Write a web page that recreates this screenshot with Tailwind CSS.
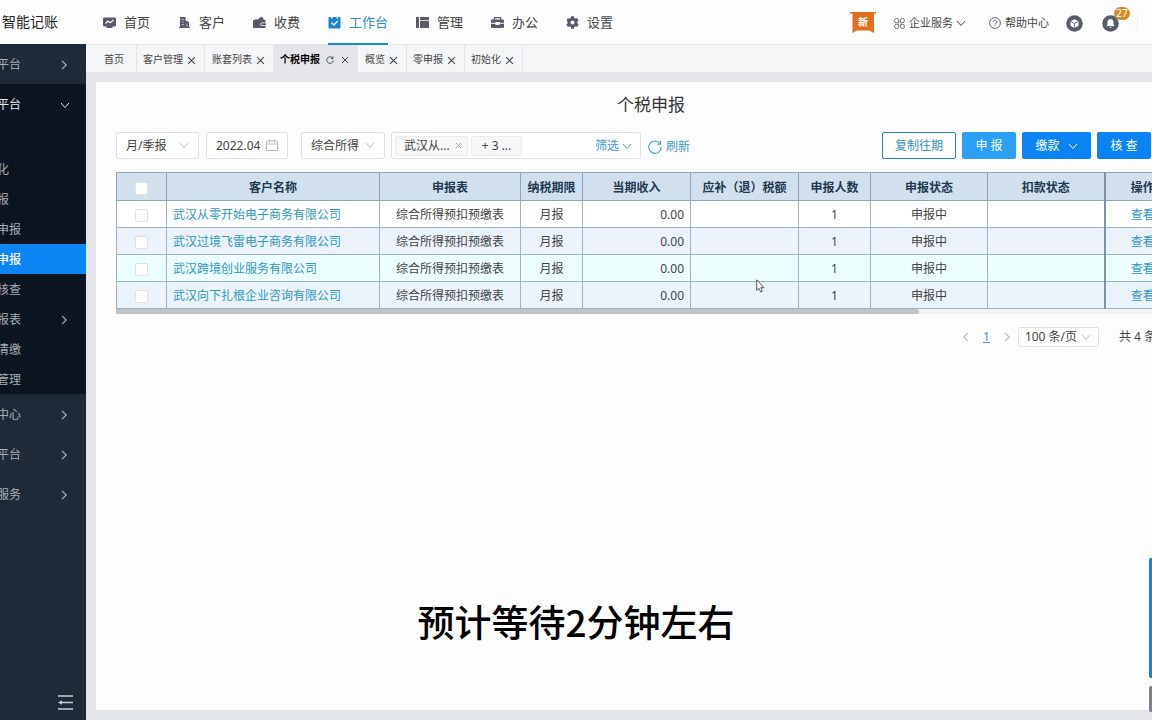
<!DOCTYPE html>
<html lang="zh-CN">
<head>
<meta charset="utf-8">
<title>个税申报</title>
<script src="https://cdn.jsdelivr.net/npm/@tailwindcss/browser@4"></script>
</head>
<body class="relative flex h-screen flex-col overflow-hidden bg-[#e4e5e8] font-['Noto_Sans','Noto_Sans_CJK_SC',sans-serif] text-xs text-[#444]">

<svg class="hidden" aria-hidden="true">
  <symbol id="down" viewBox="0 0 10 10"><path d="M1 3l4 4.500 4-4.500" fill="none" stroke="currentColor"/></symbol>
  <symbol id="right" viewBox="0 0 10 10"><path d="M3 .8L7.200 5 3 9.200" fill="none" stroke="currentColor" stroke-width="1.200"/></symbol>
  <symbol id="left" viewBox="0 0 10 10"><path d="M7 .8L2.800 5 7 9.200" fill="none" stroke="currentColor" stroke-width="1.200"/></symbol>
  <symbol id="x" viewBox="0 0 8 8"><path d="M1 1l6 6M7 1L1 7" fill="none" stroke="currentColor"/></symbol>
</svg>

<header class="flex h-[45px] shrink-0 items-center border-b border-[#e3e5e7] bg-[#fdfdfe]">
  <div class="w-[103px] shrink-0 pl-0.5 text-sm text-[#222]">智能记账</div>
  <nav class="-mb-px flex h-[45px] shrink-0 gap-7 text-[13px] text-[#444]">
    <a href="#" class="flex items-center gap-2"><svg class="w-[13px] h-[13px]" viewBox="0 0 13 13"><path fill="#5a5a69" d="M1 1.500h11a1 1 0 011 1v7a1 1 0 01-1 1H9.500v1.500h-6v-1.500H1a1 1 0 01-1-1v-7a1 1 0 011-1z"/><path d="M2.500 7.500l2.500-2.500 2.200 1.700L10.500 4" fill="none" stroke="#fff" stroke-width="1.200"/></svg>首页</a>
    <a href="#" class="flex items-center gap-2"><svg class="w-[13px] h-[13px]" viewBox="0 0 13 13"><path fill="#5a5a69" d="M2 1h5.500v3.500L11 6v5h1v1H1v-1h1z"/><path d="M3.500 3.500h2.500M3.500 6h2.500M3.500 8.500h2.500M9 7.500V11" stroke="#fff" stroke-width=".5"/></svg>客户</a>
    <a href="#" class="flex items-center gap-2"><svg class="w-[13px] h-[13px]" viewBox="0 0 13 13"><path fill="#5a5a69" d="M1 4l2.500-1 .5 1 4.500-3.500L11 3l-1 1h2.500v2.500H9a1.500 1.500 0 000 3.500h3.500v2H1a1 1 0 01-1-1V5a1 1 0 011-1z"/><path fill="#5a5a69" d="M9 7.300h4v2H9a1 1 0 010-2z"/></svg>收费</a>
    <a href="#" class="flex items-center gap-2 border-b-2 border-[#1e86cc] pt-0.5 text-[#2f8fc9]" aria-current="page"><svg class="w-[13px] h-[13px]" viewBox="0 0 13 13"><path fill="#1b84cf" d="M1.500 1H3v1.500h1.500V1h4v1.500H10V1h1.500a1 1 0 011 1v9.500a1 1 0 01-1 1h-10a1 1 0 01-1-1V2a1 1 0 011-1z"/><path d="M3.500 6.800l2.300 2.200L9.700 5" fill="none" stroke="#fff" stroke-width="1.300"/></svg>工作台</a>
    <a href="#" class="flex items-center gap-2"><svg class="w-[13px] h-[13px]" viewBox="0 0 13 13"><path fill="#5a5a69" d="M0 1h3v11H0zM4 1h9v3H4zM4 4.700h9V12H4z"/></svg>管理</a>
    <a href="#" class="flex items-center gap-2"><svg class="w-[13px] h-[13px]" viewBox="0 0 13 13"><path fill="#5a5a69" d="M3.500 1h6a.8.8 0 01.8.8V3.500H12a1 1 0 011 1v2.300H8.500v-.8h-4v.8H0V4.500a1 1 0 011-1h1.700V1.800A.8.8 0 013.500 1zm.5 1.300v1.200h5V2.300zM0 7.800h4.500V9h4V7.800H13V11a1 1 0 01-1 1H1a1 1 0 01-1-1z"/></svg>办公</a>
    <a href="#" class="flex items-center gap-2"><svg class="w-[13px] h-[13px]" viewBox="0 0 13 13"><circle cx="6.500" cy="6.500" r="3.500" fill="none" stroke="#5a5a69" stroke-width="3"/><path d="M6.500 .3v2M6.500 10.700v2M1.100 3.400l1.800 1M10.100 8.600l1.800 1M1.100 9.600l1.800-1M10.100 4.400l1.800-1" stroke="#5a5a69" stroke-width="3"/></svg>设置</a>
  </nav>
  <div class="ml-auto flex shrink-0 items-center pt-0.5 pr-[14px] text-[11px]">
    <div class="relative mr-[18px] flex h-[22px] w-[26px] items-center justify-center text-[10px] font-bold text-white">
      <svg class="absolute inset-0 h-full w-full" viewBox="0 0 26 22"><path fill="#e36f1e" d="M0 0h26v1.500h-2V21l-5-2.500h-12L2.500 21V1.500H0z"/></svg><span class="relative">新</span>
    </div>
    <button class="mr-[23px] flex items-center gap-1"><svg class="w-[11px] h-[11px]" viewBox="0 0 11 11" fill="none" stroke="#666" stroke-width=".9"><path d="M4.700 4.700H2.600a2.100 2.100 0 112.100-2.100zM6.300 4.700V2.600a2.100 2.100 0 112.100 2.100zM4.700 6.300v2.100a2.100 2.100 0 11-2.100-2.100zM6.300 6.300h2.100a2.100 2.100 0 11-2.100 2.100z"/></svg>企业服务<svg class="-ml-px w-[10px] h-[10px]"><use href="#down"/></svg></button>
    <a href="#" class="mr-[17px] flex items-center gap-1"><svg class="w-3 h-3" viewBox="0 0 12 12" fill="none" stroke="#555" stroke-width=".9"><circle cx="6" cy="6" r="5.400"/><path d="M4.300 4.900a1.700 1.700 0 113 1C6.600 6.400 6 6.600 6 7.500M6 8.300v1"/></svg>帮助中心</a>
    <button class="mr-[19px]" aria-label="产品"><svg class="w-[17px] h-[17px]" viewBox="0 0 17 17"><circle cx="8.500" cy="8.500" r="8.300" fill="#575d69"/><path d="M8.500 4.200l4 2v4.500l-4 2.200-4-2.200V6.200z" fill="#fff"/><path d="M4.800 6.500l3.700 2 3.700-2M8.500 8.500v4" fill="none" stroke="#575d69" stroke-width=".9"/></svg></button>
    <button class="relative mr-[18px]" aria-label="消息"><svg class="w-[17px] h-[17px]" viewBox="0 0 17 17"><circle cx="8.500" cy="8.500" r="8.300" fill="#575d69"/><path d="M8.500 4c2 0 3 1.500 3 3.300v2.200l1 1.500h-8l1-1.500V7.300C5.500 5.500 6.500 4 8.500 4zM7.300 11.700h2.400c0 1.500-2.400 1.500-2.400 0z" fill="#fff"/></svg><span class="absolute -top-2 left-3 flex h-[13px] w-4 items-center justify-center rounded-full bg-[#d38b26] text-[10px] leading-none text-white">27</span></button>
    <span class="h-4 w-px bg-[#eee]"></span>
  </div>
</header>

<div class="flex min-h-0 flex-1">
  <aside class="-mt-px flex w-[86px] shrink-0 flex-col overflow-hidden bg-[#1f2937] text-[#a7adb6]">
    <nav class="[&_a]:pt-0.5">
      <a href="#" class="flex h-10 items-center justify-between pr-[17px]"><span class="-ml-[3px]">平台</span><svg class="w-[10px] h-[10px]"><use href="#right"/></svg></a>
      <a href="#" class="flex h-10 items-center justify-between bg-[#0d1520] pr-4 text-[#e3e6ea]"><span class="-ml-[3px]">平台</span><svg class="w-[10px] h-[10px]"><use href="#down"/></svg></a>
      <div class="bg-[#0d1520] pt-[30px]">
        <a href="#" class="flex h-[30px] items-center"><span class="-ml-[3px]">化</span></a>
        <a href="#" class="flex h-[30px] items-center"><span class="-ml-[3px]">报</span></a>
        <a href="#" class="flex h-[30px] items-center"><span class="-ml-[3px]">申报</span></a>
        <a href="#" class="flex h-[30px] items-center bg-[#0c86f5] font-medium text-white" aria-current="page"><span class="-ml-[3px]">申报</span></a>
        <a href="#" class="flex h-[30px] items-center"><span class="-ml-[3px]">核查</span></a>
        <a href="#" class="flex h-[30px] items-center justify-between pr-[17px]"><span class="-ml-[3px]">报表</span><svg class="w-[10px] h-[10px]"><use href="#right"/></svg></a>
        <a href="#" class="flex h-[30px] items-center"><span class="-ml-[3px]">清缴</span></a>
        <a href="#" class="flex h-[30px] items-center"><span class="-ml-[3px]">管理</span></a>
      </div>
      <a href="#" class="flex h-10 items-center justify-between pr-[17px]"><span class="-ml-[3px]">中心</span><svg class="w-[10px] h-[10px]"><use href="#right"/></svg></a>
      <a href="#" class="flex h-10 items-center justify-between pr-[17px]"><span class="-ml-[3px]">平台</span><svg class="w-[10px] h-[10px]"><use href="#right"/></svg></a>
      <a href="#" class="flex h-10 items-center justify-between pr-[17px]"><span class="-ml-[3px]">服务</span><svg class="w-[10px] h-[10px]"><use href="#right"/></svg></a>
    </nav>
    <button class="mt-auto mr-[13px] mb-2.5 self-end" aria-label="收起菜单"><svg class="h-[15px] w-[15px]" viewBox="0 0 15 15"><path d="M0 1h15M4 7.500h11M0 14h15" stroke="#c9ced6" stroke-width="1.300"/><path d="M0 7.500l4-2.200v4.400z" fill="#c9ced6"/></svg></button>
  </aside>

  <main class="flex min-w-0 flex-1 flex-col overflow-hidden">
    <div class="flex h-[27px] shrink-0 bg-[#f5f6f8] text-[10px] [&>*]:pt-[3px]">
      <a href="#" class="flex w-[51px] items-center border-r border-[#e3e5e8] pl-[18px]">首页</a>
      <div class="flex items-center gap-1 border-r border-[#e3e5e8] pr-2 pl-[6px]"><a href="#">客户管理</a><button aria-label="关闭"><svg class="w-[9px] h-[9px]" ><use href="#x"/></svg></button></div>
      <div class="flex items-center gap-1 pr-2 pl-[7px]"><a href="#">账套列表</a><button aria-label="关闭"><svg class="w-[9px] h-[9px]"><use href="#x"/></svg></button></div>
      <div class="flex items-center bg-[#e4e5e8] pr-[9px] pl-[7px]"><a href="#" class="font-bold text-black">个税申报</a><button class="ml-[6px]" aria-label="刷新"><svg class="w-2 h-2" viewBox="0 0 8 8"><path d="M6.800 2.300A3.300 3.300 0 107.300 4.500M7 .5v2H5" fill="none" stroke="currentColor" stroke-width=".9"/></svg></button><button class="ml-[7px]" aria-label="关闭"><svg class="w-2 h-2"><use href="#x"/></svg></button></div>
      <div class="flex items-center gap-1 border-r border-[#e3e5e8] pr-2 pl-[7px]"><a href="#">概览</a><button aria-label="关闭"><svg class="w-[9px] h-[9px]"><use href="#x"/></svg></button></div>
      <div class="flex items-center gap-1 border-r border-[#e3e5e8] pr-2 pl-[6px]"><a href="#">零申报</a><button aria-label="关闭"><svg class="w-[9px] h-[9px]"><use href="#x"/></svg></button></div>
      <div class="flex items-center gap-1 border-r border-[#e3e5e8] pr-2 pl-[6px]"><a href="#">初始化</a><button aria-label="关闭"><svg class="w-[9px] h-[9px]"><use href="#x"/></svg></button></div>
    </div>

    <section class="mt-2.5 -mr-[54px] mb-2.5 ml-2.5 flex-1 bg-[#fdfdfd] px-5 pt-[11px]">
      <h1 class="text-center text-[17px] leading-6 text-[#333]">个税申报</h1>

      <div class="mt-[15px] flex h-[27px] items-stretch">
        <div class="relative w-[83px]"><select aria-label="报税周期" class="h-full w-full appearance-none rounded-xs border border-[#dfe1e3] bg-white pl-[9px]"><option>月/季报</option></select><svg class="pointer-events-none absolute top-2 right-2.5 h-[10px] w-[10px] text-[#bbb]"><use href="#down"/></svg></div>
        <div class="relative ml-[7px] w-[82px]"><input aria-label="月份" value="2022.04" class="h-full w-full rounded-xs border border-[#dfe1e3] bg-white pl-[9px]"><svg class="absolute top-[7px] right-2.5 h-3 w-3 text-[#bbb]" viewBox="0 0 12 12"><path d="M.5 2h11v9.500H.5zM.5 5h11M3.500 .5v3M8.500 .5v3" fill="none" stroke="currentColor"/></svg></div>
        <div class="relative ml-[13px] w-[84px]"><select aria-label="所得类型" class="h-full w-full appearance-none rounded-xs border border-[#dfe1e3] bg-white pl-[9px]"><option>综合所得</option></select><svg class="pointer-events-none absolute top-2 right-2.5 h-[10px] w-[10px] text-[#bbb]"><use href="#down"/></svg></div>
        <div class="ml-[6px] flex w-[250px] items-center gap-[3px] rounded-xs border border-[#dfe1e3] bg-white px-[3px]">
          <span class="flex h-5 w-[73px] items-center justify-between rounded-xs border border-[#ececec] bg-[#f8f8f8] pr-[5px] pl-2">武汉从...<button class="text-[#999]" aria-label="移除"><svg class="w-[7px] h-[7px]" viewBox="0 0 8 8"><use href="#x"/></svg></button></span>
          <span class="flex h-5 w-[51px] items-center justify-center rounded-xs border border-[#ececec] bg-[#f8f8f8]">+ 3 ...</span>
          <button class="ml-auto flex items-center gap-[3px] pr-[5px] text-[#3c9dcb]">筛选<svg class="w-[10px] h-[10px]"><use href="#down"/></svg></button>
        </div>
        <button class="ml-[7px] flex items-center gap-1 pt-0.5 text-[#3c9dcb]"><svg class="h-[14px] w-[14px]" viewBox="0 0 14 14"><path d="M12 3.500A6.200 6.200 0 1013.200 7M12.500 .8v3.400H9.200" fill="none" stroke="currentColor" stroke-width="1.100"/></svg>刷新</button>
        <div class="mr-[35px] ml-auto flex gap-[6px] text-white">
          <button class="w-[74px] rounded-xs border border-[#2a86b5] bg-white text-[#3690c0]">复制往期</button>
          <button class="w-[54px] rounded-xs bg-[#2ba0f4]">申 报</button>
          <button class="flex w-[69px] items-center justify-center gap-2 rounded-xs bg-[#0b83f3]">缴款<svg class="w-[10px] h-[10px]"><use href="#down"/></svg></button>
          <button class="w-[54px] rounded-xs bg-[#0b83f3]">核 查</button>
        </div>
      </div>

      <table class="mt-[13px] w-full table-fixed border-collapse [&_td]:border [&_td]:border-[#9db3c3] [&_td]:px-0 [&_td]:pt-0.5 [&_td]:pb-0 [&_th]:border [&_th]:border-[#8fa8bb] [&_th]:px-0 [&_th]:pt-[3px] [&_th]:pb-0">
        <colgroup><col class="w-[50px]"><col class="w-[213px]"><col class="w-[141px]"><col class="w-[62px]"><col class="w-[108px]"><col class="w-[108px]"><col class="w-[72px]"><col class="w-[117px]"><col class="w-[117px]"><col></colgroup>
        <thead class="bg-[#d2e0ee] text-[#23394f]">
          <tr class="h-7"><th><input type="checkbox" aria-label="全选" class="block mx-auto size-[13px] appearance-none rounded-xs border border-[#dde3e9] bg-white"></th><th>客户名称</th><th>申报表</th><th>纳税期限</th><th>当期收入</th><th>应补（退）税额</th><th>申报人数</th><th>申报状态</th><th>扣款状态</th><th class="border-l-2! border-l-[#7d93a5]! pr-[5px]!">操作</th></tr>
        </thead>
        <tbody class="text-center">
          <tr class="h-[27px] bg-white"><td><input type="checkbox" aria-label="选择" class="block mx-auto size-[13px] appearance-none rounded-xs border border-[#dfe1e3] bg-white"></td><td class="pl-[6px]! text-left"><a href="#" class="text-[#2f97c1]">武汉从零开始电子商务有限公司</a></td><td>综合所得预扣预缴表</td><td>月报</td><td class="pr-[6px]! text-right">0.00</td><td></td><td>1</td><td>申报中</td><td></td><td class="border-l-2! border-l-[#7d93a5]! pr-[5px]!"><a href="#" class="text-[#2f97d1]">查看</a></td></tr>
          <tr class="h-[27px] bg-[#ebf2f9]"><td><input type="checkbox" aria-label="选择" class="block mx-auto size-[13px] appearance-none rounded-xs border border-[#dfe1e3] bg-white"></td><td class="pl-[6px]! text-left"><a href="#" class="text-[#2f97c1]">武汉过境飞雷电子商务有限公司</a></td><td>综合所得预扣预缴表</td><td>月报</td><td class="pr-[6px]! text-right">0.00</td><td></td><td>1</td><td>申报中</td><td></td><td class="border-l-2! border-l-[#7d93a5]! pr-[5px]!"><a href="#" class="text-[#2f97d1]">查看</a></td></tr>
          <tr class="h-[27px] bg-[#edfefe]"><td><input type="checkbox" aria-label="选择" class="block mx-auto size-[13px] appearance-none rounded-xs border border-[#dfe1e3] bg-white"></td><td class="pl-[6px]! text-left"><a href="#" class="text-[#2f97c1]">武汉跨境创业服务有限公司</a></td><td>综合所得预扣预缴表</td><td>月报</td><td class="pr-[6px]! text-right">0.00</td><td></td><td>1</td><td>申报中</td><td></td><td class="border-l-2! border-l-[#7d93a5]! pr-[5px]!"><a href="#" class="text-[#2f97d1]">查看</a></td></tr>
          <tr class="h-[27px] bg-[#ebf3fa]"><td><input type="checkbox" aria-label="选择" class="block mx-auto size-[13px] appearance-none rounded-xs border border-[#dfe1e3] bg-white"></td><td class="pl-[6px]! text-left"><a href="#" class="text-[#2f97c1]">武汉向下扎根企业咨询有限公司</a></td><td>综合所得预扣预缴表</td><td>月报</td><td class="pr-[6px]! text-right">0.00</td><td></td><td>1</td><td>申报中</td><td></td><td class="border-l-2! border-l-[#7d93a5]! pr-[5px]!"><a href="#" class="text-[#2f97d1]">查看</a></td></tr>
        </tbody>
      </table>
      <div class="h-[5px] bg-[#f1f1f1]"><div class="h-full w-3/4 rounded-r-full bg-[#c3c4c6]"></div></div>

      <div class="mt-[13px] mr-[30px] flex h-5 items-center justify-end">
        <button class="text-[#bbb]" aria-label="上一页"><svg class="w-[10px] h-[10px]"><use href="#left"/></svg></button>
        <a href="#" class="mx-3 text-[#2f97c1] underline">1</a>
        <button class="text-[#bbb]" aria-label="下一页"><svg class="w-[10px] h-[10px]"><use href="#right"/></svg></button>
        <div class="relative mr-5 ml-[6px] h-5 w-[81px]"><select aria-label="每页条数" class="h-full w-full appearance-none rounded-xs border border-[#dfe1e3] bg-white pl-[6px]"><option>100 条/页</option></select><svg class="pointer-events-none absolute top-[5px] right-2 h-[10px] w-[10px] text-[#bbb]"><use href="#down"/></svg></div>
        <span>共 4 条</span>
      </div>
    </section>
  </main>
</div>

<!-- floating side panel tabs -->
<div class="absolute right-0 bottom-2 flex w-[3px] flex-col gap-2">
  <div class="h-[120px] rounded-l-xs bg-[#1580e6]"></div>
  <div class="h-[26px] rounded-l-xs bg-[#7d818b]"></div>
</div>

<!-- video caption and mouse pointer -->
<p class="pointer-events-none absolute inset-x-0 bottom-[71px] text-center font-['Noto_Sans_CJK_SC',sans-serif] text-[37px] leading-14 font-medium text-black">预计等待2分钟左右</p>
<svg class="pointer-events-none absolute top-[279px] left-[756px] h-[14px] w-[9px]" viewBox="0 0 9 14"><path d="M.7 .8v10.500l2.300-2 1.600 3.700 1.700-.8L4.800 8.700h3.200z" fill="#fff" stroke="#444" stroke-width=".9"/></svg>
</body>
</html>
